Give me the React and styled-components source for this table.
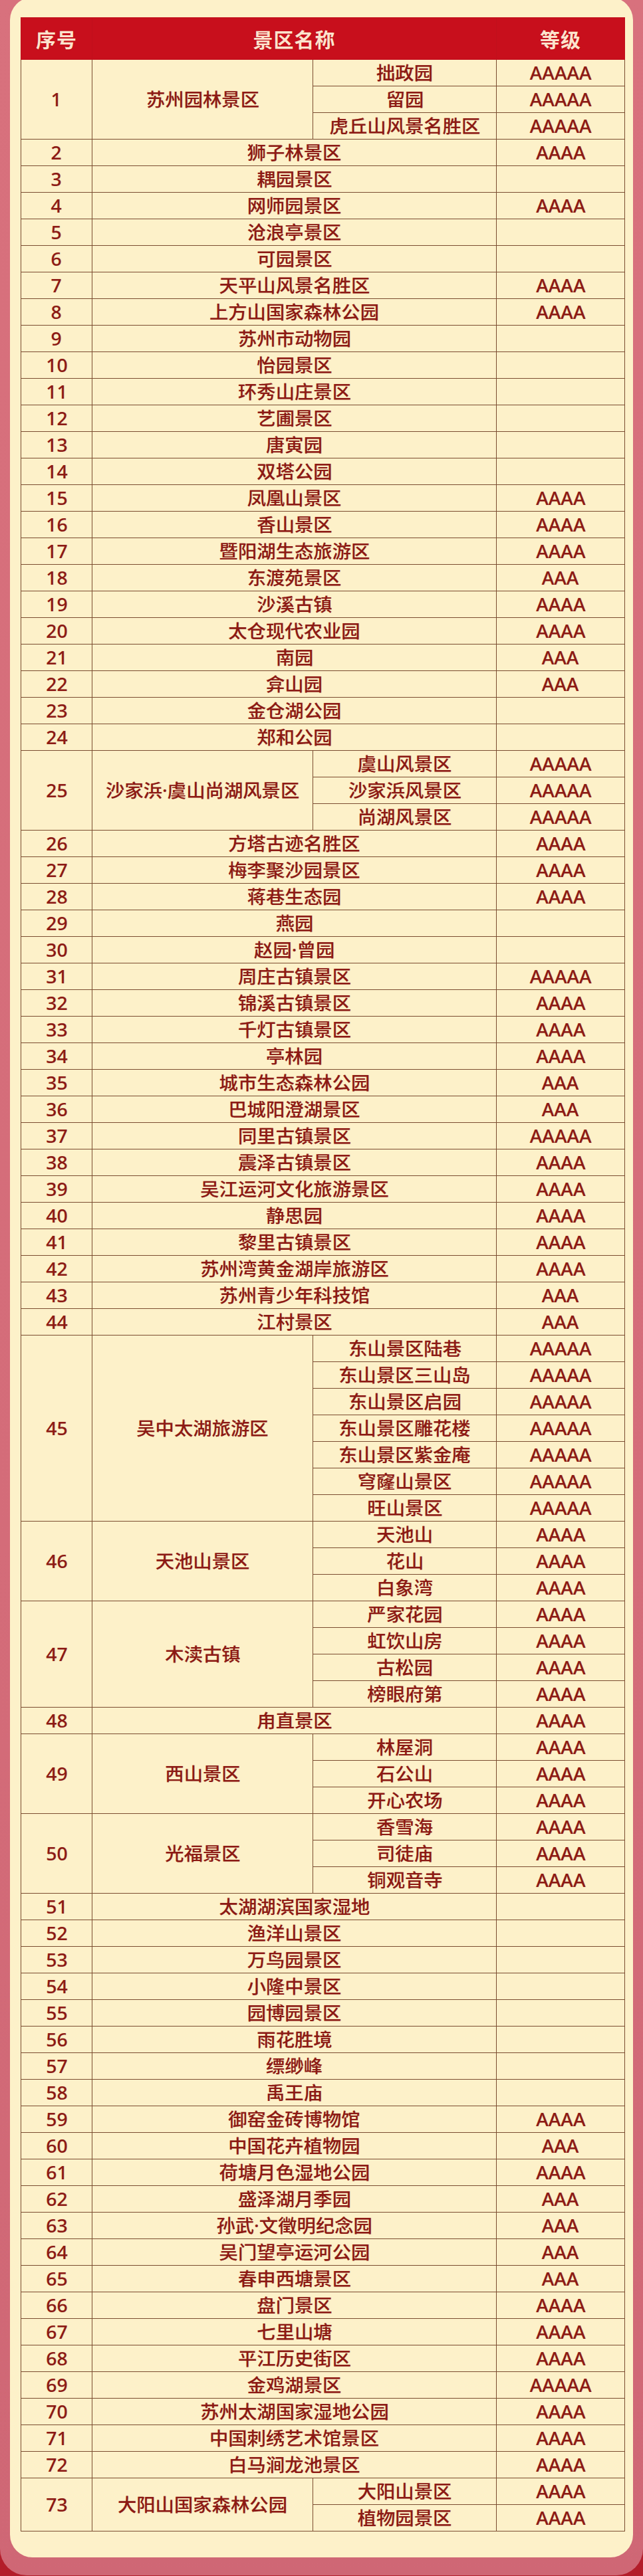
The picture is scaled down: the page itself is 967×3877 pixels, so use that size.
import React from 'react';
import styled, { createGlobalStyle } from 'styled-components';

const GlobalStyle = createGlobalStyle`
  html, body { margin: 0; padding: 0; }
  body {
    background: #b31d2a;
    font-family: "Noto Sans", "Noto Sans CJK SC", sans-serif;
  }
`;

const Frame = styled.div`
  background: linear-gradient(180deg, #d8717d 0%, #d46c79 60%, #cf6775 100%);
  border-radius: 0 0 40px 40px;
  padding: 0 15px 27px 15px;
`;

const Panel = styled.div`
  margin-top: -4px;
  background: #fdf1c9;
  border-radius: 34px;
  padding: 30px 13px 39px 16px;
`;

const Table = styled.table`
  width: 908px;
  border-collapse: collapse;
  table-layout: fixed;
  color: #8c1a14;
`;

const HeadRow = styled.tr`
  height: 63px;
  background: #c80f1c;
`;

const HeadCell = styled.th`
  padding: 0;
  border: 1px solid #c0101c;
  color: #fde3cd;
  font-family: "Noto Sans CJK SC", sans-serif;
  font-size: 30px;
  font-weight: 700;
  text-align: center;
  vertical-align: middle;
  letter-spacing: 1px;
  text-shadow: 0 0 1px rgba(120, 10, 10, 0.5);
`;

const Row = styled.tr`
  height: 40px;
`;

const Cell = styled.td`
  padding: 0;
  border: 1px solid #7a4c30;
  font-size: 27px;
  font-weight: 500;
  line-height: 1;
  text-align: center;
  vertical-align: middle;
  white-space: nowrap;
  text-shadow: 0 0 1px rgba(140, 26, 20, 0.35);
`;

const Wide = styled.span`
  display: inline-block;
  transform: scaleX(1.05);
`;

const data = [
  { n: 1, name: '苏州园林景区', subs: [['拙政园', 'AAAAA'], ['留园', 'AAAAA'], ['虎丘山风景名胜区', 'AAAAA']] },
  { n: 2, name: '狮子林景区', g: 'AAAA' },
  { n: 3, name: '耦园景区' },
  { n: 4, name: '网师园景区', g: 'AAAA' },
  { n: 5, name: '沧浪亭景区' },
  { n: 6, name: '可园景区' },
  { n: 7, name: '天平山风景名胜区', g: 'AAAA' },
  { n: 8, name: '上方山国家森林公园', g: 'AAAA' },
  { n: 9, name: '苏州市动物园' },
  { n: 10, name: '怡园景区' },
  { n: 11, name: '环秀山庄景区' },
  { n: 12, name: '艺圃景区' },
  { n: 13, name: '唐寅园' },
  { n: 14, name: '双塔公园' },
  { n: 15, name: '凤凰山景区', g: 'AAAA' },
  { n: 16, name: '香山景区', g: 'AAAA' },
  { n: 17, name: '暨阳湖生态旅游区', g: 'AAAA' },
  { n: 18, name: '东渡苑景区', g: 'AAA' },
  { n: 19, name: '沙溪古镇', g: 'AAAA' },
  { n: 20, name: '太仓现代农业园', g: 'AAAA' },
  { n: 21, name: '南园', g: 'AAA' },
  { n: 22, name: '弇山园', g: 'AAA' },
  { n: 23, name: '金仓湖公园' },
  { n: 24, name: '郑和公园' },
  { n: 25, name: '沙家浜·虞山尚湖风景区', subs: [['虞山风景区', 'AAAAA'], ['沙家浜风景区', 'AAAAA'], ['尚湖风景区', 'AAAAA']] },
  { n: 26, name: '方塔古迹名胜区', g: 'AAAA' },
  { n: 27, name: '梅李聚沙园景区', g: 'AAAA' },
  { n: 28, name: '蒋巷生态园', g: 'AAAA' },
  { n: 29, name: '燕园' },
  { n: 30, name: '赵园·曾园' },
  { n: 31, name: '周庄古镇景区', g: 'AAAAA' },
  { n: 32, name: '锦溪古镇景区', g: 'AAAA' },
  { n: 33, name: '千灯古镇景区', g: 'AAAA' },
  { n: 34, name: '亭林园', g: 'AAAA' },
  { n: 35, name: '城市生态森林公园', g: 'AAA' },
  { n: 36, name: '巴城阳澄湖景区', g: 'AAA' },
  { n: 37, name: '同里古镇景区', g: 'AAAAA' },
  { n: 38, name: '震泽古镇景区', g: 'AAAA' },
  { n: 39, name: '吴江运河文化旅游景区', g: 'AAAA' },
  { n: 40, name: '静思园', g: 'AAAA' },
  { n: 41, name: '黎里古镇景区', g: 'AAAA' },
  { n: 42, name: '苏州湾黄金湖岸旅游区', g: 'AAAA' },
  { n: 43, name: '苏州青少年科技馆', g: 'AAA' },
  { n: 44, name: '江村景区', g: 'AAA' },
  {
    n: 45, name: '吴中太湖旅游区', subs: [
      ['东山景区陆巷', 'AAAAA'], ['东山景区三山岛', 'AAAAA'], ['东山景区启园', 'AAAAA'],
      ['东山景区雕花楼', 'AAAAA'], ['东山景区紫金庵', 'AAAAA'], ['穹窿山景区', 'AAAAA'], ['旺山景区', 'AAAAA'],
    ],
  },
  { n: 46, name: '天池山景区', subs: [['天池山', 'AAAA'], ['花山', 'AAAA'], ['白象湾', 'AAAA']] },
  { n: 47, name: '木渎古镇', subs: [['严家花园', 'AAAA'], ['虹饮山房', 'AAAA'], ['古松园', 'AAAA'], ['榜眼府第', 'AAAA']] },
  { n: 48, name: '甪直景区', g: 'AAAA' },
  { n: 49, name: '西山景区', subs: [['林屋洞', 'AAAA'], ['石公山', 'AAAA'], ['开心农场', 'AAAA']] },
  { n: 50, name: '光福景区', subs: [['香雪海', 'AAAA'], ['司徒庙', 'AAAA'], ['铜观音寺', 'AAAA']] },
  { n: 51, name: '太湖湖滨国家湿地' },
  { n: 52, name: '渔洋山景区' },
  { n: 53, name: '万鸟园景区' },
  { n: 54, name: '小隆中景区' },
  { n: 55, name: '园博园景区' },
  { n: 56, name: '雨花胜境' },
  { n: 57, name: '缥缈峰' },
  { n: 58, name: '禹王庙' },
  { n: 59, name: '御窑金砖博物馆', g: 'AAAA' },
  { n: 60, name: '中国花卉植物园', g: 'AAA' },
  { n: 61, name: '荷塘月色湿地公园', g: 'AAAA' },
  { n: 62, name: '盛泽湖月季园', g: 'AAA' },
  { n: 63, name: '孙武·文徵明纪念园', g: 'AAA' },
  { n: 64, name: '吴门望亭运河公园', g: 'AAA' },
  { n: 65, name: '春申西塘景区', g: 'AAA' },
  { n: 66, name: '盘门景区', g: 'AAAA' },
  { n: 67, name: '七里山塘', g: 'AAAA' },
  { n: 68, name: '平江历史街区', g: 'AAAA' },
  { n: 69, name: '金鸡湖景区', g: 'AAAAA' },
  { n: 70, name: '苏州太湖国家湿地公园', g: 'AAAA' },
  { n: 71, name: '中国刺绣艺术馆景区', g: 'AAAA' },
  { n: 72, name: '白马涧龙池景区', g: 'AAAA' },
  { n: 73, name: '大阳山国家森林公园', subs: [['大阳山景区', 'AAAA'], ['植物园景区', 'AAAA']] },
];

function Entry({ item }) {
  if (!item.subs) {
    return (
      <Row>
        <Cell><Wide>{item.n}</Wide></Cell>
        <Cell colSpan={2}><Wide>{item.name}</Wide></Cell>
        <Cell><Wide>{item.g || ''}</Wide></Cell>
      </Row>
    );
  }
  const span = item.subs.length;
  return (
    <>
      {item.subs.map(([sub, g], i) => (
        <Row key={sub}>
          {i === 0 && <Cell rowSpan={span}><Wide>{item.n}</Wide></Cell>}
          {i === 0 && <Cell rowSpan={span}><Wide>{item.name}</Wide></Cell>}
          <Cell><Wide>{sub}</Wide></Cell>
          <Cell><Wide>{g}</Wide></Cell>
        </Row>
      ))}
    </>
  );
}

export default function App() {
  return (
    <>
      <GlobalStyle />
      <Frame>
        <Panel>
          <Table>
            <colgroup>
              <col style={{ width: 107 }} />
              <col style={{ width: 332 }} />
              <col style={{ width: 276 }} />
              <col style={{ width: 193 }} />
            </colgroup>
            <thead>
              <HeadRow>
                <HeadCell>序号</HeadCell>
                <HeadCell colSpan={2}>景区名称</HeadCell>
                <HeadCell>等级</HeadCell>
              </HeadRow>
            </thead>
            <tbody>
              {data.map((item) => (
                <Entry key={item.n} item={item} />
              ))}
            </tbody>
          </Table>
        </Panel>
      </Frame>
    </>
  );
}
